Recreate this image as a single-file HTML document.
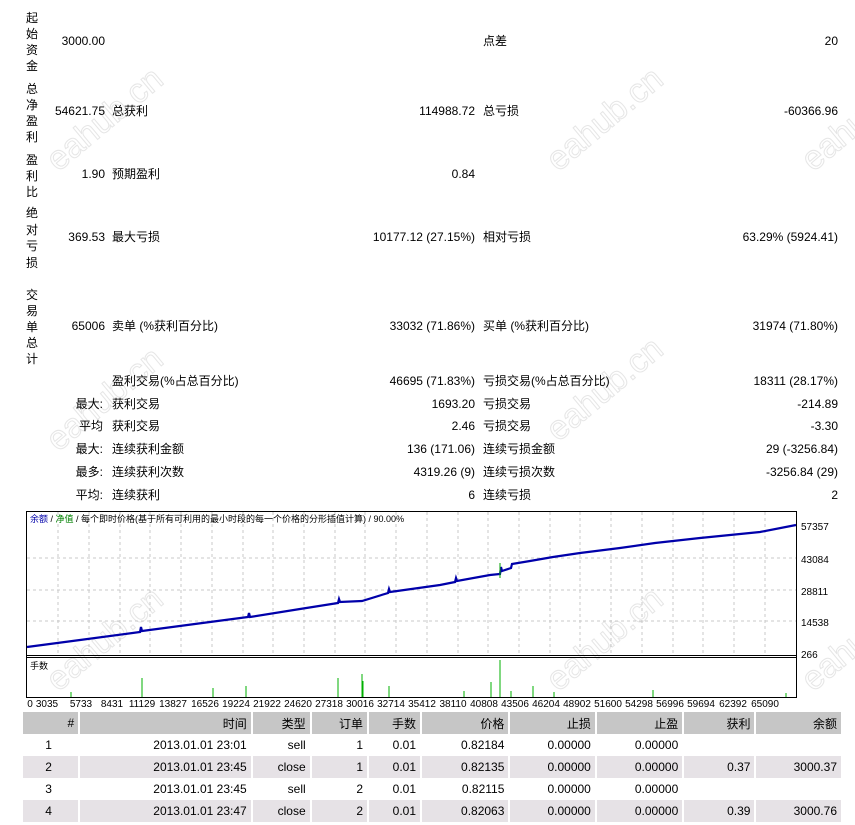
<!DOCTYPE html>
<html><head><meta charset="utf-8"><style>
body{margin:0;width:855px;height:825px;background:#fff;overflow:hidden;position:relative;font-family:"Liberation Sans","Noto Sans CJK SC",sans-serif;font-size:12px;color:#000}
.t{position:absolute;white-space:nowrap;line-height:14px}
.r{text-align:right}
.v{position:absolute;left:25px;width:14px;text-align:center;line-height:14px}
.wm{position:absolute;font-size:34px;color:transparent;-webkit-text-stroke:1px #e6e6e6;transform:rotate(-40deg);white-space:nowrap;font-family:"Liberation Sans",sans-serif}
table{position:absolute;left:23px;top:712px;border-collapse:collapse;width:818px;font-size:12px}
td{height:22px;padding:0 4px 0 0;text-align:right;border-left:2px solid #fff}
tr.h td{background:#c6c6c6}
tr.g td{background:#e6e2e6}
</style></head><body>
<div class="wm" style="left:35px;top:100px">eahub.cn</div>
<div class="wm" style="left:535px;top:100px">eahub.cn</div>
<div class="wm" style="left:790px;top:100px">eahub.cn</div>
<div class="wm" style="left:35px;top:380px">eahub.cn</div>
<div class="wm" style="left:535px;top:370px">eahub.cn</div>
<div class="wm" style="left:35px;top:620px">eahub.cn</div>
<div class="wm" style="left:535px;top:620px">eahub.cn</div>
<div class="wm" style="left:790px;top:620px">eahub.cn</div>

<div class="v" style="top:10px;line-height:16px">起<br>始<br>资<br>金</div>
<div class="v" style="top:81px;line-height:16px">总<br>净<br>盈<br>利</div>
<div class="v" style="top:152px;line-height:16px">盈<br>利<br>比</div>
<div class="v" style="top:205px;line-height:16.5px">绝<br>对<br>亏<br>损</div>
<div class="v" style="top:287px;line-height:16px">交<br>易<br>单<br>总<br>计</div>

<div class="t r" style="right:750px;top:34px">3000.00</div>
<div class="t" style="left:483px;top:34px">点差</div>
<div class="t r" style="right:17px;top:34px">20</div>

<div class="t r" style="right:750px;top:104px">54621.75</div>
<div class="t" style="left:112px;top:104px">总获利</div>
<div class="t r" style="right:380px;top:104px">114988.72</div>
<div class="t" style="left:483px;top:104px">总亏损</div>
<div class="t r" style="right:17px;top:104px">-60366.96</div>

<div class="t r" style="right:750px;top:167px">1.90</div>
<div class="t" style="left:112px;top:167px">预期盈利</div>
<div class="t r" style="right:380px;top:167px">0.84</div>

<div class="t r" style="right:750px;top:230px">369.53</div>
<div class="t" style="left:112px;top:230px">最大亏损</div>
<div class="t r" style="right:380px;top:230px">10177.12 (27.15%)</div>
<div class="t" style="left:483px;top:230px">相对亏损</div>
<div class="t r" style="right:17px;top:230px">63.29% (5924.41)</div>

<div class="t r" style="right:750px;top:319px">65006</div>
<div class="t" style="left:112px;top:319px">卖单 (%获利百分比)</div>
<div class="t r" style="right:380px;top:319px">33032 (71.86%)</div>
<div class="t" style="left:483px;top:319px">买单 (%获利百分比)</div>
<div class="t r" style="right:17px;top:319px">31974 (71.80%)</div>

<div class="t" style="left:112px;top:374px">盈利交易(%占总百分比)</div>
<div class="t r" style="right:380px;top:374px">46695 (71.83%)</div>
<div class="t" style="left:483px;top:374px">亏损交易(%占总百分比)</div>
<div class="t r" style="right:17px;top:374px">18311 (28.17%)</div>

<div class="t r" style="right:752px;top:397px">最大:</div>
<div class="t" style="left:112px;top:397px">获利交易</div>
<div class="t r" style="right:380px;top:397px">1693.20</div>
<div class="t" style="left:483px;top:397px">亏损交易</div>
<div class="t r" style="right:17px;top:397px">-214.89</div>

<div class="t r" style="right:752px;top:419px">平均</div>
<div class="t" style="left:112px;top:419px">获利交易</div>
<div class="t r" style="right:380px;top:419px">2.46</div>
<div class="t" style="left:483px;top:419px">亏损交易</div>
<div class="t r" style="right:17px;top:419px">-3.30</div>

<div class="t r" style="right:752px;top:442px">最大:</div>
<div class="t" style="left:112px;top:442px">连续获利金额</div>
<div class="t r" style="right:380px;top:442px">136 (171.06)</div>
<div class="t" style="left:483px;top:442px">连续亏损金额</div>
<div class="t r" style="right:17px;top:442px">29 (-3256.84)</div>

<div class="t r" style="right:752px;top:465px">最多:</div>
<div class="t" style="left:112px;top:465px">连续获利次数</div>
<div class="t r" style="right:380px;top:465px">4319.26 (9)</div>
<div class="t" style="left:483px;top:465px">连续亏损次数</div>
<div class="t r" style="right:17px;top:465px">-3256.84 (29)</div>

<div class="t r" style="right:752px;top:488px">平均:</div>
<div class="t" style="left:112px;top:488px">连续获利</div>
<div class="t r" style="right:380px;top:488px">6</div>
<div class="t" style="left:483px;top:488px">连续亏损</div>
<div class="t r" style="right:17px;top:488px">2</div>

<svg style="position:absolute;left:0;top:505px" width="855" height="205">
<g stroke="#c8c8c8" stroke-dasharray="3,3" stroke-width="1">
<line x1="27" y1="53" x2="796" y2="53"/><line x1="27" y1="85" x2="796" y2="85"/><line x1="27" y1="116" x2="796" y2="116"/>
<line x1="58" y1="7" x2="58" y2="150"/><line x1="89" y1="7" x2="89" y2="150"/><line x1="120" y1="7" x2="120" y2="150"/><line x1="150" y1="7" x2="150" y2="150"/><line x1="181" y1="7" x2="181" y2="150"/><line x1="212" y1="7" x2="212" y2="150"/><line x1="243" y1="7" x2="243" y2="150"/><line x1="273" y1="7" x2="273" y2="150"/><line x1="304" y1="7" x2="304" y2="150"/><line x1="335" y1="7" x2="335" y2="150"/><line x1="365" y1="7" x2="365" y2="150"/><line x1="396" y1="7" x2="396" y2="150"/><line x1="427" y1="7" x2="427" y2="150"/><line x1="458" y1="7" x2="458" y2="150"/><line x1="488" y1="7" x2="488" y2="150"/><line x1="519" y1="7" x2="519" y2="150"/><line x1="550" y1="7" x2="550" y2="150"/><line x1="580" y1="7" x2="580" y2="150"/><line x1="611" y1="7" x2="611" y2="150"/><line x1="642" y1="7" x2="642" y2="150"/><line x1="673" y1="7" x2="673" y2="150"/><line x1="703" y1="7" x2="703" y2="150"/><line x1="734" y1="7" x2="734" y2="150"/><line x1="765" y1="7" x2="765" y2="150"/>
</g>
<rect x="26.5" y="6.5" width="770" height="186" fill="none" stroke="#000"/>
<line x1="27" y1="150.5" x2="797" y2="150.5" stroke="#000"/>
<line x1="27" y1="152.5" x2="797" y2="152.5" stroke="#000"/>
<polyline fill="none" stroke="#0000aa" stroke-width="2.2" points="27,142 80,135 140,127 141,122 142,126 210,117 248,112 249,108 250,112 300,104 338,98 339,94 340,97 362,96 388,88 389,84 390,87 440,80 455,77 456,73 457,76 490,70 500,69 501,62 502,66 511,63 512,59 530,56 553,52 580,48 620,43 655,38 700,33 760,27 796,20"/>
<line x1="500" y1="58" x2="500" y2="73" stroke="#00a000"/>
<g fill="#000" font-size="10" font-family="Liberation Sans,sans-serif">
<text x="801" y="25">57357</text><text x="801" y="58">43084</text><text x="801" y="90">28811</text><text x="801" y="121">14538</text><text x="801" y="153">266</text>
</g>
<text x="30" y="17" font-size="9" font-family="Liberation Sans,Noto Sans CJK SC,sans-serif"><tspan fill="#0000aa">余额</tspan> / <tspan fill="#008000">净值</tspan> / 每个即时价格(基于所有可利用的最小时段的每一个价格的分形插值计算) / 90.00%</text>
<text x="30" y="164" font-size="9" font-family="Liberation Sans,Noto Sans CJK SC,sans-serif">手数</text>
<g stroke="#00b000" stroke-width="1">
<line x1="71" y1="192" x2="71" y2="187"/><line x1="142" y1="192" x2="142" y2="173"/><line x1="213" y1="192" x2="213" y2="183"/><line x1="246" y1="192" x2="246" y2="181"/><line x1="338" y1="192" x2="338" y2="173"/><line x1="362" y1="192" x2="362" y2="169"/><line x1="363" y1="192" x2="363" y2="176"/><line x1="389" y1="192" x2="389" y2="181"/><line x1="464" y1="192" x2="464" y2="186"/><line x1="491" y1="192" x2="491" y2="177"/><line x1="500" y1="192" x2="500" y2="155"/><line x1="511" y1="192" x2="511" y2="186"/><line x1="533" y1="192" x2="533" y2="181"/><line x1="554" y1="192" x2="554" y2="187"/><line x1="653" y1="192" x2="653" y2="185"/><line x1="786" y1="192" x2="786" y2="188"/>
</g>
<g fill="#000" font-size="10" font-family="Liberation Sans,sans-serif" text-anchor="middle">
<text x="30" y="202">0</text><text x="47" y="202">3035</text><text x="81" y="202">5733</text><text x="112" y="202">8431</text><text x="142" y="202">11129</text><text x="173" y="202">13827</text><text x="205" y="202">16526</text><text x="236" y="202">19224</text><text x="267" y="202">21922</text><text x="298" y="202">24620</text><text x="329" y="202">27318</text><text x="360" y="202">30016</text><text x="391" y="202">32714</text><text x="422" y="202">35412</text><text x="453" y="202">38110</text><text x="484" y="202">40808</text><text x="515" y="202">43506</text><text x="546" y="202">46204</text><text x="577" y="202">48902</text><text x="608" y="202">51600</text><text x="639" y="202">54298</text><text x="670" y="202">56996</text><text x="701" y="202">59694</text><text x="733" y="202">62392</text><text x="765" y="202">65090</text>
</g>
</svg>

<table>
<tr class="h"><td style="width:53px;border-left:0">#</td><td style="width:171px">时间</td><td style="width:54px">类型</td><td style="width:53px">订单</td><td style="width:48px">手数</td><td style="width:84px">价格</td><td style="width:82px">止损</td><td style="width:83px">止盈</td><td style="width:68px">获利</td><td style="width:82px">余额</td></tr>
<tr><td style="border-left:0;text-align:center">1</td><td>2013.01.01 23:01</td><td>sell</td><td>1</td><td>0.01</td><td>0.82184</td><td>0.00000</td><td>0.00000</td><td></td><td></td></tr>
<tr class="g"><td style="border-left:0;text-align:center">2</td><td>2013.01.01 23:45</td><td>close</td><td>1</td><td>0.01</td><td>0.82135</td><td>0.00000</td><td>0.00000</td><td>0.37</td><td>3000.37</td></tr>
<tr><td style="border-left:0;text-align:center">3</td><td>2013.01.01 23:45</td><td>sell</td><td>2</td><td>0.01</td><td>0.82115</td><td>0.00000</td><td>0.00000</td><td></td><td></td></tr>
<tr class="g"><td style="border-left:0;text-align:center">4</td><td>2013.01.01 23:47</td><td>close</td><td>2</td><td>0.01</td><td>0.82063</td><td>0.00000</td><td>0.00000</td><td>0.39</td><td>3000.76</td></tr>
</table>
</body></html>
